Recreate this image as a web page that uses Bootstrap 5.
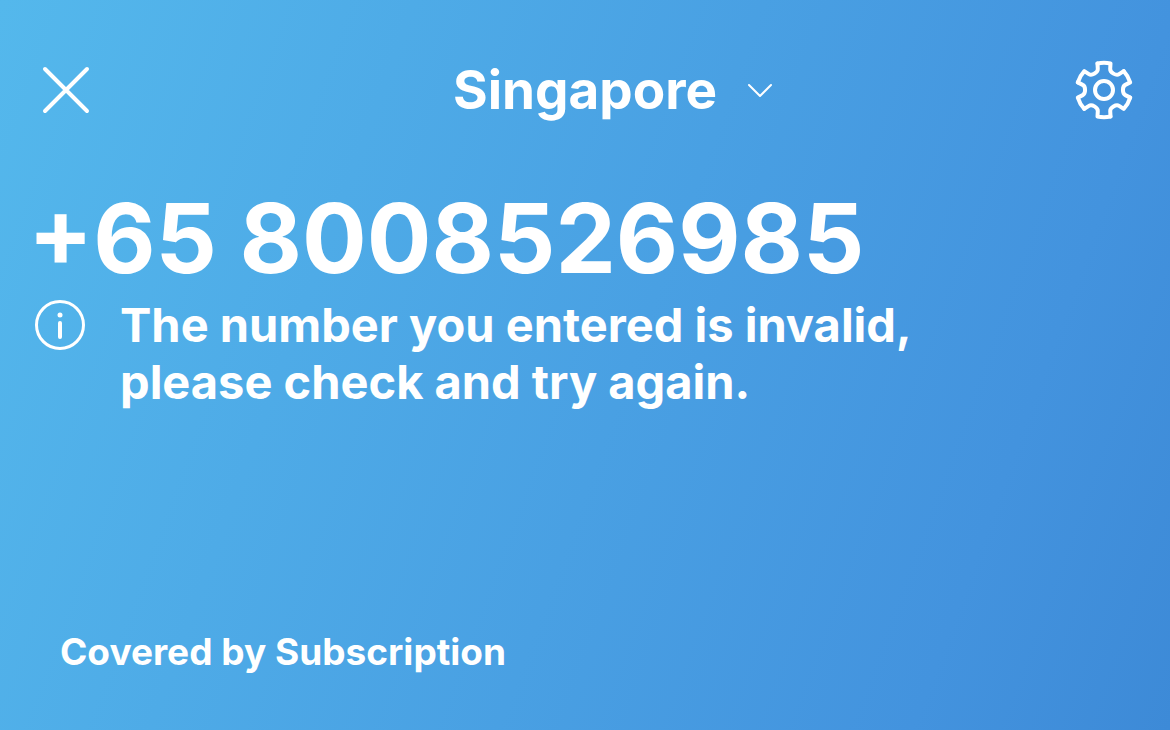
<!DOCTYPE html>
<html lang="en">
<head>
<meta charset="utf-8">
<meta name="viewport" content="width=device-width, initial-scale=1">
<title>Dialer</title>
<link href="https://cdn.jsdelivr.net/npm/bootstrap@5.3.0/dist/css/bootstrap.min.css" rel="stylesheet">
<style>
body { font-family: Inter, "Liberation Sans", sans-serif; color: #fff; }
.dialer { background: linear-gradient(110deg, #54b8ec 0%, #4393de 82%, #3d8ad7 100%); padding: 58px 28px 56px; }
.dialer-bar, .notice { padding: 0 6px; }
.icon-btn { width: 64px; height: 64px; color: #fff; border: 0; }
.country { font-size: 53px; line-height: 64px; font-weight: 700; color: #fff; border: 0; gap: 30px; margin-left: 56px; }
.phone { font-size: 96px; line-height: 112px; font-weight: 700; margin-top: 60px; }
.notice { font-size: 47px; line-height: 57px; font-weight: 700; gap: 34px; margin-top: 2px; }
.coverage { font-size: 37px; line-height: 44px; font-weight: 700; padding-left: 32px; }
</style>
</head>
<body>
<main class="dialer min-vh-100 d-flex flex-column">
  <header class="dialer-bar d-flex align-items-center justify-content-between">
    <button type="button" class="icon-btn btn p-0 rounded-0" aria-label="Close">
      <svg class="d-block" width="64" height="64" viewBox="0 0 64 64" fill="none" stroke="currentColor" stroke-width="4" stroke-linecap="round"><path d="M11 11 53 53M53 11 11 53"/></svg>
    </button>
    <button type="button" class="country btn p-0 d-flex align-items-center">Singapore
      <svg width="26" height="16" viewBox="0 0 26 16" fill="none" stroke="currentColor" stroke-width="2" stroke-linecap="round" stroke-linejoin="round"><path d="M2 3 13 14 24 3"/></svg>
    </button>
    <button type="button" class="icon-btn btn p-0 rounded-0" aria-label="Settings">
      <svg class="d-block" width="64" height="64" viewBox="-32 -32 64 64" fill="none" stroke="currentColor" stroke-width="4" stroke-linecap="round" stroke-linejoin="round">
        <circle r="9"/>
        <path id="tooth" d="M-6.5-26.5Q0-28 6.5-26.5L6.2-21C6-17.5 12.2-13.9 15.1-15.9L19.7-18.9"/>
        <use href="#tooth" transform="rotate(60)"/>
        <use href="#tooth" transform="rotate(120)"/>
        <use href="#tooth" transform="rotate(180)"/>
        <use href="#tooth" transform="rotate(240)"/>
        <use href="#tooth" transform="rotate(300)"/>
      </svg>
    </button>
  </header>
  <h1 class="phone mb-0">+65 8008526985</h1>
  <div class="notice d-flex align-items-start" role="alert">
    <svg class="flex-shrink-0" width="52" height="57" viewBox="0 0 52 57" fill="none" stroke="currentColor" stroke-width="3" stroke-linecap="round"><circle cx="26" cy="29" r="23.5"/><path stroke-width="4" d="M26 27V41"/><circle cx="26" cy="19" r="2.5" fill="currentColor" stroke="none"/></svg>
    <p class="mb-0">The number you entered is invalid,<br>please check and try again.</p>
  </div>
  <p class="coverage mt-auto mb-0">Covered by Subscription</p>
</main>
<script src="https://cdn.jsdelivr.net/npm/bootstrap@5.3.0/dist/js/bootstrap.bundle.min.js"></script>
</body>
</html>
